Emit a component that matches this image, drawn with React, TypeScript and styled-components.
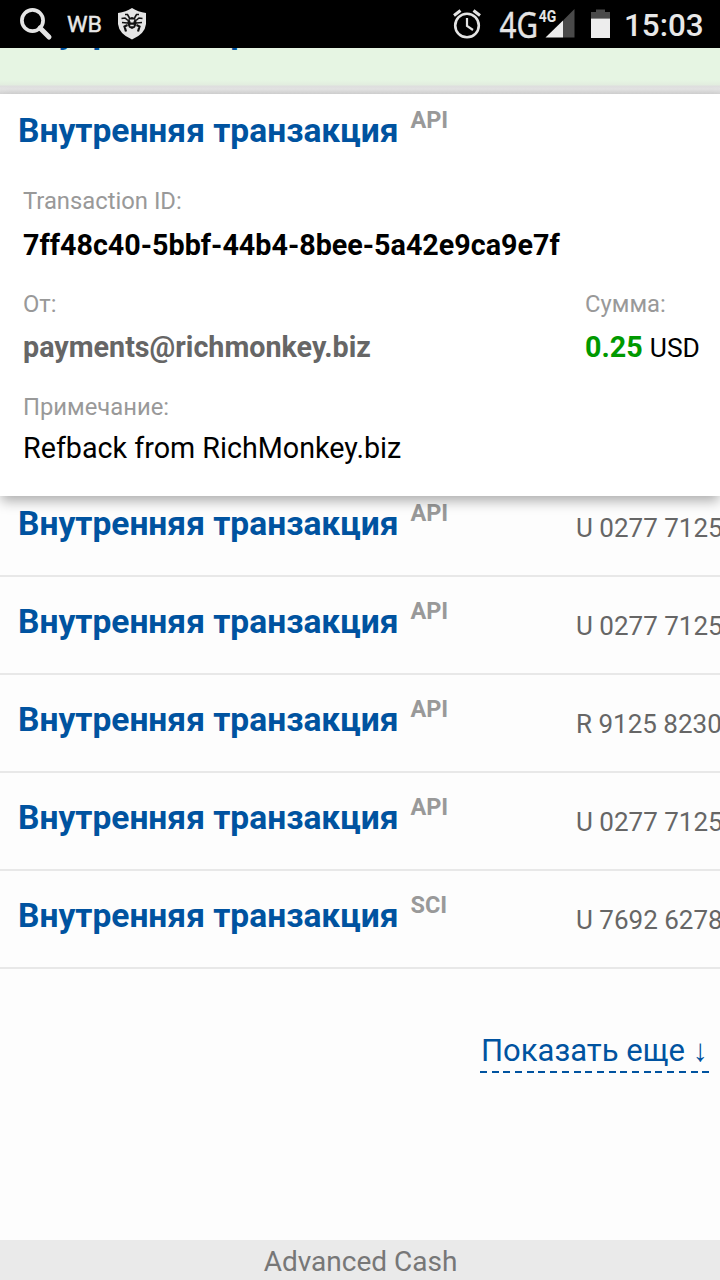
import React from "react";
import styled, { createGlobalStyle } from "styled-components";

const GlobalStyle = createGlobalStyle`
  * { box-sizing: border-box; }
  body { margin: 0; background: #fdfdfd; font-family: Roboto, "Liberation Sans", sans-serif; }
`;

const Screen = styled.div`
  display: flex;
  flex-direction: column;
  width: 720px;
  height: 1280px;
  overflow: hidden;
  background: #fdfdfd;
`;

const StatusBar = styled.header`
  display: flex;
  flex: none;
  justify-content: space-between;
  height: 48px;
  background: #000;
  color: #e8e8e8;
`;

const StatusGroup = styled.div`
  display: flex;
  align-items: flex-start;
  svg { display: block; }
`;

const Clock = styled.time`
  width: 96px;
  padding-top: 1px;
  font-size: 31.4px;
  line-height: 49px;
  font-weight: 500;
`;

const HighlightedRow = styled.section`
  flex: none;
  height: 46px;
  overflow: hidden;
  background: linear-gradient(#e6f5e3 0, #e6f5e3 32px, #e2eddf 37px, #dedede 38px, #e3e3e3 41px, #d6d6d6 46px);
`;

const ClippedTitle = styled.div`
  height: 13px;
  margin-top: -9px;
  padding-left: 18px;
  display: flex;
  align-items: flex-end;
`;

const Title = styled.h2`
  margin: 0;
  font-size: 33.55px;
  line-height: 40px;
  font-weight: 700;
  color: #0053a0;
  white-space: nowrap;
`;

const Heading = styled.div`
  display: flex;
  align-items: flex-start;
  gap: 12px;
`;

const Tag = styled.span`
  margin-top: -3px;
  font-size: 23.5px;
  line-height: 24px;
  font-weight: 700;
  color: #999;
`;

const Card = styled.article`
  position: relative;
  z-index: 1;
  flex: none;
  height: 402px;
  padding: 17px 0 0 18px;
  background: #fff;
  box-shadow: 0 6px 12px -1px rgba(0, 0, 0, 0.32);
`;

const Details = styled.div`
  display: grid;
  grid-template-columns: 562px auto;
  row-gap: 27px;
  padding: 36px 0 0 5px;
`;

const Field = styled.div<{ $wide?: boolean }>`
  grid-column: ${(p) => (p.$wide ? "1 / -1" : "auto")};
  height: 76px;
`;

const Label = styled.div`
  font-size: 23.8px;
  line-height: 28px;
  color: #999;
`;

const Value = styled.div<{ $color?: string; $weight?: number; $top?: number }>`
  margin-top: ${(p) => p.$top ?? 12}px;
  font-size: 28.7px;
  line-height: 36px;
  font-weight: ${(p) => p.$weight ?? 700};
  color: ${(p) => p.$color ?? "#000"};
  white-space: nowrap;
`;

const Currency = styled.span`
  font-size: 26.4px;
  font-weight: 400;
  color: #000;
`;

const List = styled.ul`
  flex: none;
  margin: -17px 0 0;
  padding: 0;
  list-style: none;
`;

const Row = styled.li`
  display: grid;
  grid-template-columns: 558px 200px;
  height: 98px;
  padding: 25px 0 0 18px;
  border-bottom: 2px solid #e8e8e8;
  overflow: hidden;
`;

const Account = styled.span`
  padding-top: 4px;
  font-size: 26px;
  line-height: 40px;
  color: #666;
  white-space: nowrap;
`;

const More = styled.div`
  display: flex;
  flex: 1;
  justify-content: flex-end;
  align-items: flex-start;
  padding: 62px 10px 0 0;
`;

const MoreLink = styled.a`
  display: block;
  width: 230px;
  height: 42px;
  padding-left: 1px;
  font-size: 31px;
  line-height: 40px;
  color: #0053a0;
  white-space: nowrap;
  background: repeating-linear-gradient(90deg, #0053a0 0, #0053a0 7px, transparent 7px, transparent 11.7px) 0 100% / 100% 2px no-repeat;
`;

const Footer = styled.footer`
  flex: none;
  height: 40px;
  background: #eaeaea;
  color: #777;
  font-size: 28px;
  line-height: 43px;
  text-align: center;
  padding-left: 1px;
`;

const LeftIcons = () => (
  <svg width="160" height="48" viewBox="0 0 160 48">
    <circle cx="32.500" cy="20.500" r="10.600" fill="none" stroke="#e4e4e4" strokeWidth="3.700" />
    <path d="M40 28 L49 37" stroke="#e4e4e4" strokeWidth="5" strokeLinecap="round" />
    <text x="67" y="32" fill="#e8e8e8" stroke="#e8e8e8" strokeWidth="0.400" fontSize="22" textLength="35" lengthAdjust="spacingAndGlyphs">WB</text>
    <path d="M132 8 Q138 12 146 13 V24 Q145 34 132 39.500 Q119 34 118 24 V13 Q126 12 132 8Z" fill="#e4e4e4" />
    <g stroke="#111" fill="none" strokeWidth="1.600">
      <path d="M129.500 18 L127.500 14.500 L125 14.500 M134.500 18 L136.500 14.500 L139 14.500 M128 20.500 L125 18 L121.500 18.500 M136 20.500 L139 18 L142.500 18.500 M127.500 23 L122 22.500 M136.500 23 L142 22.500" />
      <path d="M127.500 25 L124.500 26.500 L126 31.500 M136.500 25 L139.500 26.500 L138 31.500" strokeWidth="2.200" />
    </g>
    <path d="M129 18 L132 17 L135 18 L137 23 L135 27.500 L132 29 L129 27.500 L127 23Z" fill="#111" />
    <path d="M129.500 19.500 L134.500 19.500 L133 23 L132 22 L131 23Z M130.300 24.800 H133.700 V26.300 H130.300Z" fill="#e4e4e4" />
  </svg>
);

const RightIcons = () => (
  <svg width="184" height="48" viewBox="440 0 184 48">
    <g fill="none" stroke="#e4e4e4" strokeWidth="2.600">
      <circle cx="467" cy="25.500" r="11.800" />
      <path d="M467 18 V26 L473 30" strokeWidth="2.200" />
      <path d="M454 15.500 L460.500 10.500 M480 15.500 L473.500 10.500" strokeWidth="3" />
    </g>
    <text x="499.500" y="37.500" fill="#e4e4e4" stroke="#e4e4e4" strokeWidth="0.400" fontFamily="Noto Sans" fontSize="36.500" textLength="38.500" lengthAdjust="spacingAndGlyphs">4G</text>
    <path d="M563 37.500 V20.500 L574.500 9 V37.500Z" fill="#4a4a4a" />
    <path d="M545.500 37.500 L563 20.500 V37.500Z" fill="#ededed" />
    <text x="538.700" y="21.500" fill="#e4e4e4" fontSize="16.500" fontWeight="700" textLength="17.500" lengthAdjust="spacingAndGlyphs">4G</text>
    <path d="M591 18.500 V12 H596 V9.500 H605 V12 H610 V18.500Z" fill="#4a4a4a" />
    <rect x="591" y="18.500" width="19" height="19.500" fill="#ededed" />
  </svg>
);

const TransactionHeading = ({ tag }: { tag: string }) => (
  <Heading>
    <Title>Внутренняя транзакция</Title>
    <Tag>{tag}</Tag>
  </Heading>
);

const transactions = [
  { tag: "API", account: "U 0277 7125" },
  { tag: "API", account: "U 0277 7125" },
  { tag: "API", account: "R 9125 8230" },
  { tag: "API", account: "U 0277 7125" },
  { tag: "SCI", account: "U 7692 6278" },
];

export default function App() {
  return (
    <Screen>
      <GlobalStyle />
      <StatusBar>
        <StatusGroup><LeftIcons /></StatusGroup>
        <StatusGroup><RightIcons /><Clock>15:03</Clock></StatusGroup>
      </StatusBar>
      <HighlightedRow>
        <ClippedTitle><Title>Внутренняя транзакция</Title></ClippedTitle>
      </HighlightedRow>
      <Card>
        <TransactionHeading tag="API" />
        <Details>
          <Field $wide>
            <Label>Transaction ID:</Label>
            <Value>7ff48c40-5bbf-44b4-8bee-5a42e9ca9e7f</Value>
          </Field>
          <Field>
            <Label>От:</Label>
            <Value $color="#666" $top={11}>payments@richmonkey.biz</Value>
          </Field>
          <Field>
            <Label>Сумма:</Label>
            <Value $color="#090" $top={11}>0.25 <Currency>USD</Currency></Value>
          </Field>
          <Field $wide>
            <Label>Примечание:</Label>
            <Value $weight={400} $top={9}>Refback from RichMonkey.biz</Value>
          </Field>
        </Details>
      </Card>
      <List>
        {transactions.map((t, i) => (
          <Row key={i}>
            <TransactionHeading tag={t.tag} />
            <Account>{t.account}</Account>
          </Row>
        ))}
      </List>
      <More><MoreLink>Показать еще ↓</MoreLink></More>
      <Footer>Advanced Cash</Footer>
    </Screen>
  );
}
